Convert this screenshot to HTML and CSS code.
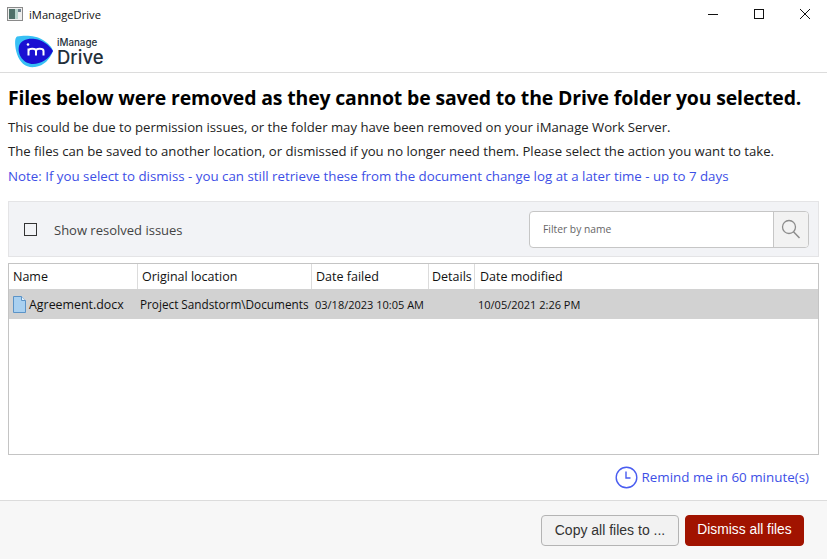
FILE: index.html
```html
<!DOCTYPE html>
<html lang="en">
<head>
    <meta charset="UTF-8">
    <title>iManageDrive</title>
    <link rel="stylesheet" href="styles.css">
</head>
<body>
    <div class="window">
        <div class="titlebar">
            <svg class="app-icon" width="16" height="14" viewBox="0 0 16 14">
                <rect x="0.5" y="0.5" width="15" height="13" fill="#eee" stroke="#8a8a8a"/>
                <rect x="2" y="2" width="6" height="10" fill="#4f6f68"/>
                <rect x="8" y="2" width="3" height="10" fill="#b9d3cc"/>
                <rect x="11" y="2" width="3" height="3" fill="#6d7f8a"/>
            </svg>
            <span class="app-name">iManageDrive</span>
            <div class="win-buttons">
                <svg width="12" height="12" viewBox="0 0 12 12"><path d="M1 6.5H11" stroke="#111" fill="none"/></svg>
                <svg width="12" height="12" viewBox="0 0 12 12"><rect x="1.5" y="1.5" width="9" height="9" stroke="#111" fill="none"/></svg>
                <svg width="12" height="12" viewBox="0 0 12 12"><path d="M1 1L11 11M11 1L1 11" stroke="#111" fill="none"/></svg>
            </div>
        </div>

        <div class="logobar">
            <svg class="logo-mark" width="40" height="33" viewBox="0 0 40 33">
                <path d="M3 1.5C10 0 22 0 29 5C34 8 38 12 39 16C36 24 30 31 21 32C12 33 6 28 3 19C1 13 0 3 3 1.5Z" fill="#38c0f4"/>
                <path d="M5 11C7 5 14 3 21 4C29 5 35 10 39 16C35 24 27 29 19 29C10 29 3 20 5 11Z" fill="#1a10d2"/>
                <circle cx="14" cy="9.5" r="1.3" fill="#fff"/>
                <path d="M14.5 20.5V13.5M14.5 16C14.5 13 22 13 22 16V20.5M22 16C22 13 29.5 13 29.5 16V20.5" stroke="#fff" stroke-width="2" fill="none"/>
            </svg>
            <div class="logo-text">
                <span class="logo-small">iManage</span>
                <span class="logo-big">Drive</span>
            </div>
        </div>

        <div class="message">
            <h1>Files below were removed as they cannot be saved to the Drive folder you selected.</h1>
            <p>This could be due to permission issues, or the folder may have been removed on your iManage Work Server.</p>
            <p>The files can be saved to another location, or dismissed if you no longer need them. Please select the action you want to take.</p>
            <p class="note">Note: If you select to dismiss - you can still retrieve these from the document change log at a later time - up to 7 days</p>
        </div>

        <div class="filterbar">
            <label class="show-resolved"><span class="checkbox"></span><span class="show-label">Show resolved issues</span></label>
            <div class="search">
                <span class="search-input">Filter by name</span>
                <span class="search-btn">
                    <svg width="20" height="20" viewBox="0 0 20 20">
                        <circle cx="8" cy="8" r="6.5" stroke="#8c8c8c" stroke-width="1.3" fill="none"/>
                        <path d="M12.5 12.8L18.5 19" stroke="#8c8c8c" stroke-width="1.5" fill="none"/>
                    </svg>
                </span>
            </div>
        </div>

        <div class="file-table">
            <div class="row head">
                <div class="c-name">Name</div>
                <div class="c-loc">Original location</div>
                <div class="c-failed">Date failed</div>
                <div class="c-details">Details</div>
                <div class="c-mod">Date modified</div>
            </div>
            <div class="row selected">
                <div class="c-name">
                    <svg width="13" height="17" viewBox="0 0 13 17">
                        <path d="M0.5 0.5H8.5L12.5 4.5V16.5H0.5Z" fill="#a9d0f0" stroke="#5b93c7"/>
                        <path d="M8.5 0.5V4.5H12.5" fill="#e4f1fb" stroke="#5b93c7"/>
                    </svg>
                    <span class="file-name">Agreement.docx</span>
                </div>
                <div class="c-loc small">Project Sandstorm\Documents</div>
                <div class="c-failed tiny">03/18/2023 10:05 AM</div>
                <div class="c-details"></div>
                <div class="c-mod tiny">10/05/2021 2:26 PM</div>
            </div>
        </div>

        <div class="remind">
            <svg width="23" height="23" viewBox="0 0 23 23">
                <circle cx="11.5" cy="11.5" r="10.3" stroke="#4a5df0" stroke-width="1.4" fill="none"/>
                <path d="M11 5.5V12H15.5" stroke="#4a5df0" stroke-width="1.4" fill="none"/>
            </svg>
            <span>Remind me in 60 minute(s)</span>
        </div>

        <div class="footer">
            <button class="btn copy">Copy all files to ...</button>
            <button class="btn danger">Dismiss all files</button>
        </div>
    </div>
</body>
</html>
```

FILE: styles.css
```css
/* Fenetre principale */
body {
    margin: 0;
    font-family: 'Open Sans', 'Noto Sans', sans-serif;
    background-color: white;
    color: #222;
}
.window {
    width: 827px;
    height: 559px;
    display: flex;
    flex-direction: column;
    overflow: hidden;
}
/* Barre de titre */
.titlebar {
    height: 28px;
    display: flex;
    align-items: center;
    padding-left: 7px;
    flex-shrink: 0;
}
.app-name {
    margin-left: 6px;
    font-size: 11.2px;
    color: #111;
}
.win-buttons {
    margin-left: auto;
    display: flex;
    gap: 34px;
    padding-right: 16px;
}
/* Logo */
.logobar {
    height: 44px;
    display: flex;
    align-items: center;
    gap: 3px;
    padding-left: 14px;
    border-bottom: 1px solid #dcdcdc;
}
.logo-mark {
    margin-top: 3px;
}
.logo-text {
    display: flex;
    flex-direction: column;
    color: #23303a;
    font-family: 'Inter', sans-serif;
    margin-top: 3px;
}
.logo-small {
    font-size: 9.8px;
    line-height: 10px;
    font-weight: 500;
}
.logo-big {
    font-size: 18.5px;
    line-height: 18px;
    font-weight: 500;
}
/* Message */
.message {
    padding: 13px 8px 0;
    height: 115px;
}
h1 {
    margin: 0 0 5px;
    font-size: 19.45px;
    line-height: 24px;
    font-weight: 700;
    color: #000;
    letter-spacing: -0.15px;
    white-space: nowrap;
}
p {
    margin: 0;
    font-size: 13.15px;
    line-height: 24.4px;
    color: #222;
    white-space: nowrap;
}
.note {
    font-size: 13.3px;
    color: #3d4fe6;
}
/* Filtre */
.filterbar {
    height: 54px;
    margin: 0 8px;
    display: flex;
    align-items: center;
    justify-content: space-between;
    background-color: #f2f3f6;
    border: 1px solid #e4e4e6;
}
.show-resolved {
    display: flex;
    align-items: center;
    font-size: 13px;
    color: #444;
    padding-left: 15px;
}
.show-label {
    margin-top: 2px;
}
.checkbox {
    width: 11px;
    height: 11px;
    border: 1px solid #333;
    margin-right: 17px;
}
.search {
    display: flex;
    width: 278px;
    height: 35px;
    margin-right: 9px;
    border: 1px solid #c6c6c6;
    border-radius: 4px;
    background-color: white;
    overflow: hidden;
}
.search-input {
    flex: 1;
    display: flex;
    align-items: center;
    padding-left: 13px;
    font-size: 10.3px;
    color: #666;
}
.search-btn {
    width: 34px;
    display: flex;
    align-items: center;
    justify-content: center;
    background-color: #f2f2f2;
    border-left: 1px solid #c6c6c6;
}
/* Tableau */
.file-table {
    height: 190px;
    margin: 6px 8px 0;
    border: 1px solid #c4c4c4;
}
.row {
    display: flex;
    align-items: center;
}
.head {
    height: 25px;
    font-size: 12.5px;
    color: #111;
}
.head > div {
    height: 100%;
    display: flex;
    align-items: center;
    border-right: 1px solid #dcdcdc;
    box-sizing: border-box;
}
.head > div:last-child {
    border-right: none;
}
.selected {
    height: 30px;
    background-color: #d2d2d2;
    color: #111;
}
.c-name {
    width: 129px;
    padding-left: 4px;
    box-sizing: border-box;
    display: flex;
    align-items: center;
    gap: 3px;
}
.c-loc {
    width: 174px;
    padding-left: 4px;
    box-sizing: border-box;
    white-space: nowrap;
}
.c-failed {
    width: 117px;
    padding-left: 4px;
    box-sizing: border-box;
    white-space: nowrap;
}
.c-details {
    width: 46px;
    padding-left: 3px;
    box-sizing: border-box;
}
.c-mod {
    flex: 1;
    padding-left: 5px;
    box-sizing: border-box;
}
.selected .c-loc {
    padding-left: 2px;
}
.selected .c-failed {
    padding-left: 3px;
}
.selected .c-mod {
    padding-left: 3px;
}
.file-name {
    font-size: 12.4px;
}
.small {
    font-size: 11.75px;
}
.tiny {
    font-size: 11px;
}
/* Rappel */
.remind {
    height: 44px;
    margin-bottom: 1px;
    display: flex;
    align-items: center;
    justify-content: flex-end;
    gap: 4px;
    padding-right: 18px;
    font-size: 13.4px;
    color: #3d4fe6;
}
/* Bas de page */
.footer {
    flex: 1;
    display: flex;
    justify-content: flex-end;
    align-items: flex-start;
    gap: 6px;
    padding: 14px 23px 0 0;
    background-color: #f7f7f7;
    border-top: 1px solid #dcdcdc;
}
.btn {
    height: 31px;
    padding: 0 0 2px;
    font-family: 'Liberation Sans', sans-serif;
    font-size: 14px;
    color: #333;
    background-color: #f2f2f2;
    border: 1px solid #b4b4b4;
    border-radius: 4px;
}
.copy {
    width: 138px;
}
.danger {
    width: 119px;
    font-size: 13.8px;
    color: white;
    background-color: #a11300;
    border-color: #a11300;
}
```
